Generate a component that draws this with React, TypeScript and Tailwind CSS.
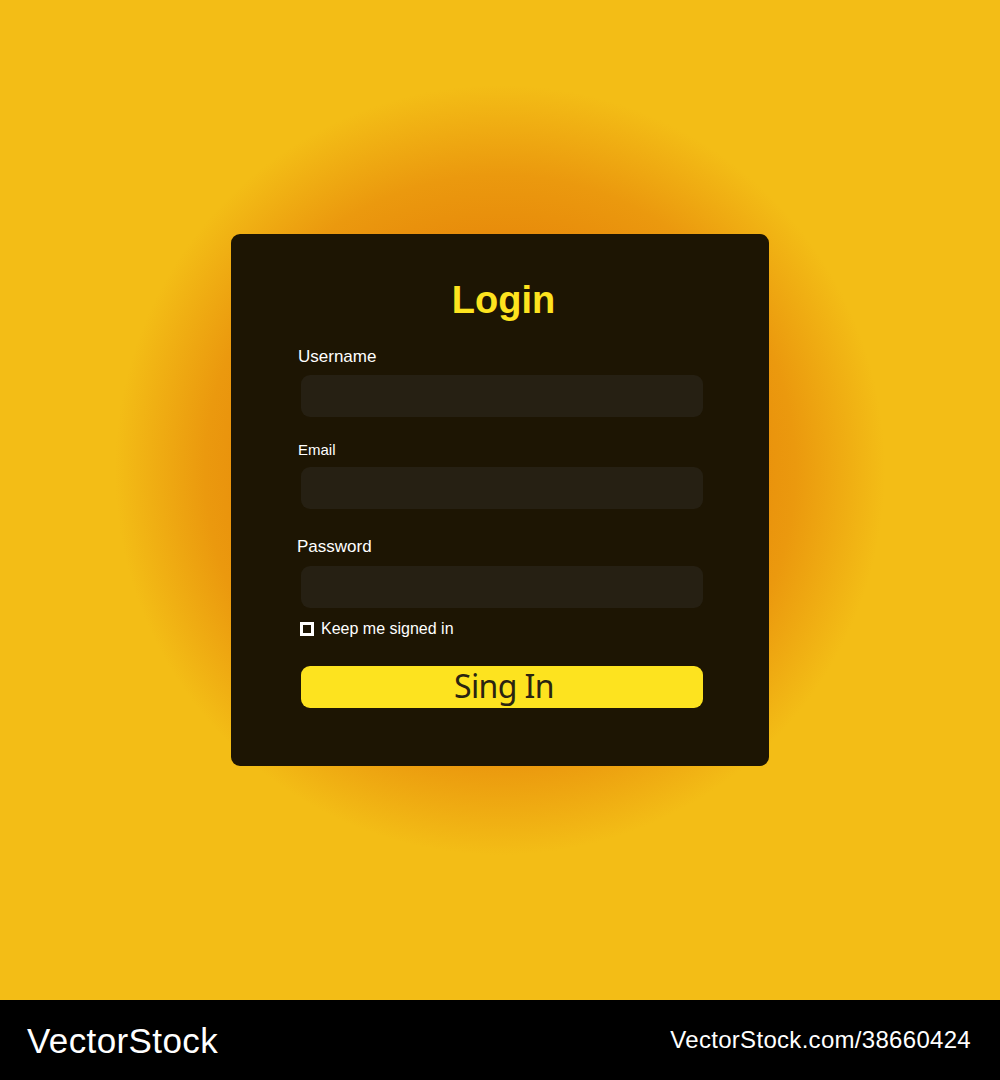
export default function App() {
  return (
    <div className="w-[1000px] font-['Liberation_Sans',Arial,sans-serif]">
      {/* Stage with glow */}
      <div className="h-[1000px] flex items-center justify-center bg-[#f3bd16] bg-[radial-gradient(circle_at_50%_47%,#e6860a_0px,#e7890a_220px,#eb990e_295px,#f3bd16_385px)]">
        <div className="w-[538px] h-[532px] rounded-[9px] bg-[#1d1503] pl-[67px] pr-[66px] pt-[44px] box-border flex flex-col">
          <h1 className="pl-[6px] text-center text-[38px] leading-[44px] font-bold text-[#fde31f]">Login</h1>

          <label className="mt-[25px] text-[17px] leading-[20px] text-white">Username</label>
          <div className="mt-[8px] ml-[3px] h-[42px] rounded-[9px] bg-[#262013]" />

          <label className="mt-[24px] text-[15px] leading-[18px] text-white">Email</label>
          <div className="mt-[8px] ml-[3px] h-[42px] rounded-[9px] bg-[#262013]" />

          <label className="mt-[28px] -ml-[1px] text-[17px] leading-[20px] text-white">Password</label>
          <div className="mt-[9px] ml-[3px] h-[42px] rounded-[9px] bg-[#262013]" />

          <div className="mt-[12px] ml-[2px] flex items-center gap-[7px]">
            <span className="w-[14px] h-[14px] border-[3px] border-white bg-[#1d1503] box-border" />
            <span className="text-[16px] leading-[18px] text-white">Keep me signed in</span>
          </div>

          <button className="mt-[28px] ml-[3px] h-[42px] rounded-[9px] bg-[#fde31f] flex items-center justify-center">
            <span className="pl-[4px] font-['Noto_Sans',sans-serif] text-[32px] leading-none text-[#2a2411] tracking-[-0.6px] -mt-[2px]">Sing In</span>
          </button>
        </div>
      </div>

      {/* Footer */}
      <div className="h-[80px] bg-black flex items-center justify-between pl-[27px] pr-[29px]">
        <span className="text-white text-[35px] leading-none tracking-[0.4px]">VectorStock</span>
        <span className="text-white text-[24px] leading-none tracking-[0.3px]">VectorStock.com/38660424</span>
      </div>
    </div>
  )
}
